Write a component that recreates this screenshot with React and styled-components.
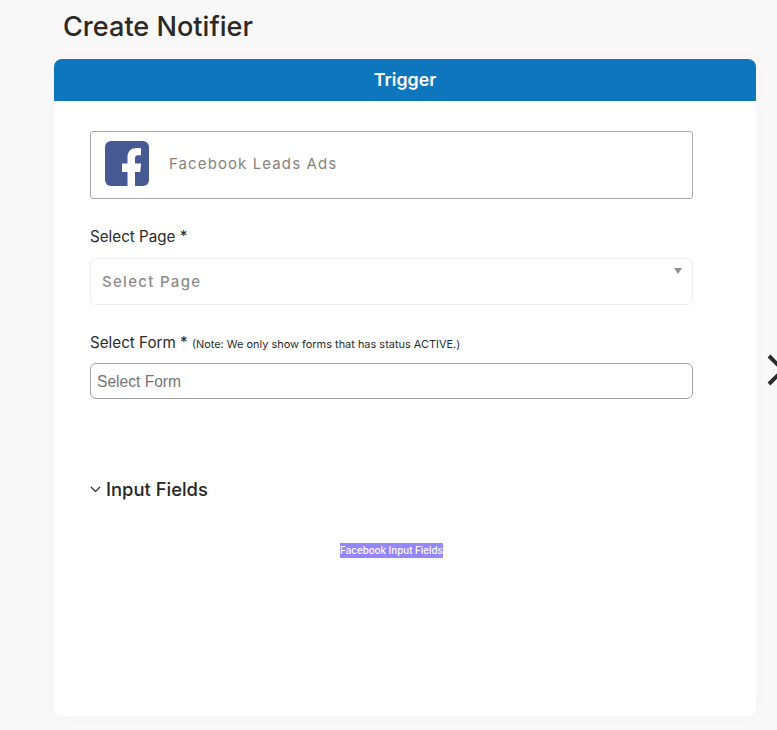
import React from 'react';
import styled, { createGlobalStyle } from 'styled-components';

const GlobalStyle = createGlobalStyle`
  html, body {
    margin: 0;
    padding: 0;
    background: #f8f8f8;
    overflow: hidden;
  }
  body {
    font-family: Inter, "Noto Sans", sans-serif;
    color: #2a2a2a;
  }
`;

const Page = styled.div`
  position: relative;
  width: 777px;
  height: 730px;
  padding-left: 54px;
  box-sizing: border-box;
  overflow: hidden;
`;

const Title = styled.h1`
  margin: 0;
  padding: 10px 0 0 9px;
  height: 59px;
  box-sizing: border-box;
  font-size: 27.1px;
  line-height: 33px;
  font-weight: 550;
  color: #2b2826;
`;

const Card = styled.section`
  width: 702px;
  height: 657px;
  background: #fff;
  border-radius: 8px;
  box-shadow: 0 0 12px rgba(0, 0, 0, 0.025);
  overflow: hidden;
`;

const CardHeader = styled.header`
  height: 42px;
  padding-bottom: 1px;
  box-sizing: border-box;
  background: #0e76bc;
  color: #fff;
  display: flex;
  align-items: center;
  justify-content: center;
  font-size: 17.8px;
  font-weight: 600;
`;

const CardBody = styled.div`
  width: 603px;
  padding: 30px 0 0 36px;
  display: flex;
  flex-direction: column;
`;

const AppBox = styled.div`
  height: 68px;
  box-sizing: border-box;
  border: 1px solid #aaa;
  border-radius: 3px;
  padding: 0 0 4px 14px;
  display: flex;
  align-items: center;
  gap: 20px;
`;

const AppName = styled.span`
  font-size: 15px;
  letter-spacing: 1.1px;
  color: #87827e;
`;

const Label = styled.div`
  margin: 28px 0 0;
  font-size: 15.2px;
  line-height: 20px;
  color: #2b2b2b;
`;

const Note = styled.small`
  font-size: 10.95px;
`;

const SelectBox = styled.div`
  position: relative;
  margin-top: 11px;
  height: 47px;
  box-sizing: border-box;
  border: 1px solid #eee;
  border-radius: 6px;
  padding-left: 11px;
  display: flex;
  align-items: center;
  font-size: 15px;
  font-weight: 500;
  letter-spacing: 1.3px;
  color: #8c8c8c;
`;

const Caret = styled.i`
  position: absolute;
  top: 9px;
  right: 10px;
  border-style: solid;
  border-width: 6px 4px 0;
  border-color: #8f8f8f transparent transparent;
`;

const TextField = styled.input`
  margin-top: 9px;
  height: 36px;
  box-sizing: border-box;
  border: 1px solid #a3a3a3;
  border-radius: 6px;
  padding: 1px 6px 0;
  font-family: "Liberation Sans", Arial, sans-serif;
  font-size: 15.6px;
  outline: none;
  &::placeholder {
    color: #757575;
    opacity: 1;
  }
`;

const SectionTitle = styled.h2`
  margin: 78px 0 0;
  height: 24px;
  display: flex;
  align-items: center;
  gap: 5px;
  font-size: 18.4px;
  font-weight: 550;
  color: #262626;
`;

const Hint = styled.div`
  margin-top: 42px;
  text-align: center;
  font-size: 0;
`;

const Highlight = styled.span`
  display: inline-block;
  height: 15px;
  line-height: 15px;
  background: #9486fb;
  color: #fff;
  font-size: 9.8px;
  font-weight: 500;
`;

const CloseIcon = styled.svg`
  position: absolute;
  left: 766px;
  top: 354px;
`;

const FacebookLogo = () => (
  <svg width="44" height="45" viewBox="0 0 44 45" aria-hidden="true">
    <rect width="44" height="45" rx="6" fill="#475993" />
    <path
      d="M30 45V31h5.200l.9-8.500H30v-5c0-2.200.8-3.200 3-3.200h3V7.300c-.9-.1-2.500-.3-4.300-.3-5.300 0-9.200 3.200-9.200 9v6.500H17V31h5.500v14z"
      fill="#fff"
    />
  </svg>
);

const Chevron = () => (
  <svg width="11" height="7" viewBox="0 0 11 7" aria-hidden="true">
    <path d="M1 1l4.500 4.500L10 1" fill="none" stroke="#262626" strokeWidth="1.200" />
  </svg>
);

export default function App() {
  return (
    <>
      <GlobalStyle />
      <Page>
        <Title>Create Notifier</Title>
        <Card>
          <CardHeader>Trigger</CardHeader>
          <CardBody>
            <AppBox>
              <FacebookLogo />
              <AppName>Facebook Leads Ads</AppName>
            </AppBox>
            <Label>Select Page *</Label>
            <SelectBox>
              Select Page
              <Caret />
            </SelectBox>
            <Label>
              Select Form * <Note>(Note: We only show forms that has status ACTIVE.)</Note>
            </Label>
            <TextField placeholder="Select Form" readOnly />
            <SectionTitle>
              <Chevron />
              Input Fields
            </SectionTitle>
            <Hint>
              <Highlight>Facebook Input Fields</Highlight>
            </Hint>
          </CardBody>
        </Card>
        <CloseIcon width="22" height="34" viewBox="0 0 22 34" aria-hidden="true">
          <path d="M3 2l28 28M3 30L31 2" stroke="#2b2b2b" strokeWidth="4" fill="none" />
        </CloseIcon>
      </Page>
    </>
  );
}
